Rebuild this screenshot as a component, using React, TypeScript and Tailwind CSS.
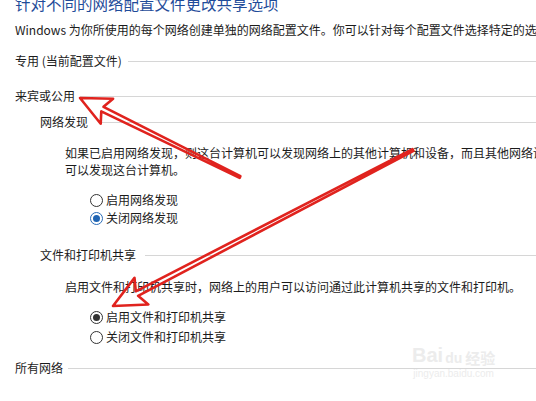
import React from "react";

const font = { fontFamily: '"Noto Sans CJK SC", "Noto Sans", sans-serif' };

const SectionHeader = ({ label, indent, gap }: { label: string; indent?: boolean; gap: string }) => (
  <div className={`flex items-center h-[18px] ${indent ? "pl-[25px]" : ""} ${gap}`}>
    <span className="whitespace-nowrap">{label}</span>
    <div className="flex-1 h-px bg-[#d6d6d6]" />
  </div>
);

const Radio = ({
  label,
  checked,
  blue,
  height,
}: {
  label: string;
  checked?: boolean;
  blue?: boolean;
  height: string;
}) => (
  <div className={`flex items-center gap-[3px] pl-[75px] ${height}`}>
    <span
      className={`w-[13px] h-[13px] rounded-full border flex items-center justify-center bg-white ${
        blue ? "border-[#2a6cb8]" : "border-[#333]"
      }`}
    >
      {checked && (
        <span className={`w-[7px] h-[7px] rounded-full ${blue ? "bg-[#1f64b3]" : "bg-[#333]"}`} />
      )}
    </span>
    <span className="whitespace-nowrap">{label}</span>
  </div>
);

// hollow hand-drawn style arrow, computed from tail -> tip
const arrowPoints = (tx: number, ty: number, hx: number, hy: number, head: number, wing: number, shaft: number) => {
  const dx = hx - tx;
  const dy = hy - ty;
  const len = Math.hypot(dx, dy);
  const ux = dx / len;
  const uy = dy / len;
  const px = -uy;
  const py = ux;
  const bx = hx - ux * head;
  const by = hy - uy * head;
  const ix = hx - ux * (head - 5);
  const iy = hy - uy * (head - 5);
  const pts = [
    [hx, hy],
    [bx + px * wing, by + py * wing],
    [ix + px * shaft, iy + py * shaft],
    [tx + px * 1, ty + py * 1],
    [tx - px * 1, ty - py * 1],
    [ix - px * shaft, iy - py * shaft],
    [bx - px * wing, by - py * wing],
  ];
  return pts.map((p) => `${p[0].toFixed(1)},${p[1].toFixed(1)}`).join(" ");
};

export default function App() {
  return (
    <div
      className="relative w-[536px] h-[401px] overflow-hidden bg-white text-[12px] text-[#1b1b1b] pl-[15px]"
      style={font}
    >
      <div className="-mt-[7px] h-[20px] leading-[20px] text-[15.5px] text-[#1f4c9a] whitespace-nowrap">
        针对不同的网络配置文件更改共享选项
      </div>
      <div className="mt-[8px] h-[18px] leading-[18px] whitespace-nowrap">
        Windows 为你所使用的每个网络创建单独的网络配置文件。你可以针对每个配置文件选择特定的选项。
      </div>

      <div className="mt-[13px]">
        <SectionHeader label="专用 (当前配置文件)" gap="gap-[6px]" />
      </div>
      <div className="mt-[17px]">
        <SectionHeader label="来宾或公用" gap="gap-[5px]" />
      </div>
      <div className="mt-[8px]">
        <SectionHeader label="网络发现" indent gap="gap-[12px]" />
      </div>

      <div className="mt-[13px] pl-[50px] leading-[17px]">
        <div className="whitespace-nowrap">
          如果已启用网络发现，则这台计算机可以发现网络上的其他计算机和设备，而且其他网络设备也
        </div>
        <div className="whitespace-nowrap">可以发现这台计算机。</div>
      </div>

      <div className="mt-[13px]">
        <Radio label="启用网络发现" height="h-[18px]" />
        <Radio label="关闭网络发现" checked blue height="h-[18px]" />
      </div>

      <div className="mt-[19px]">
        <SectionHeader label="文件和打印机共享" indent gap="gap-[9px]" />
      </div>

      <div className="mt-[14px] pl-[50px] leading-[17px] whitespace-nowrap">
        启用文件和打印机共享时，网络上的用户可以访问通过此计算机共享的文件和打印机。
      </div>

      <div className="mt-[12px]">
        <Radio label="启用文件和打印机共享" checked height="h-[20px]" />
        <Radio label="关闭文件和打印机共享" height="h-[20px]" />
      </div>

      <div className="mt-[12px]">
        <SectionHeader label="所有网络" gap="gap-[5px]" />
      </div>

      {/* faint watermark */}
      <div className="absolute left-[412px] top-[343px] flex flex-col items-center text-[#ececec] pointer-events-none">
        <div className="flex items-end h-[22px] leading-none">
          <span className="text-[20px] font-bold" style={{ fontFamily: '"Liberation Sans", sans-serif' }}>
            Bai
          </span>
          <span className="text-[14px] font-bold ml-[2px]" style={{ fontFamily: '"Liberation Sans", sans-serif' }}>
            du
          </span>
          <span className="text-[15px] font-bold ml-[3px]">经验</span>
        </div>
        <div className="text-[10px] mt-[4px] leading-none" style={{ fontFamily: '"Liberation Sans", sans-serif' }}>
          jingyan.baidu.com
        </div>
      </div>

      <svg className="absolute inset-0 pointer-events-none" width="536" height="401" viewBox="0 0 536 401">
        <polygon
          points={arrowPoints(240, 177, 80, 98, 30, 14, 2.5)}
          fill="none"
          stroke="#e0231e"
          strokeWidth="2.6"
          strokeLinejoin="round"
        />
        <polygon
          points={arrowPoints(413, 150, 113, 306, 32, 15, 2.5)}
          fill="none"
          stroke="#e0231e"
          strokeWidth="2.6"
          strokeLinejoin="round"
        />
      </svg>
    </div>
  );
}
